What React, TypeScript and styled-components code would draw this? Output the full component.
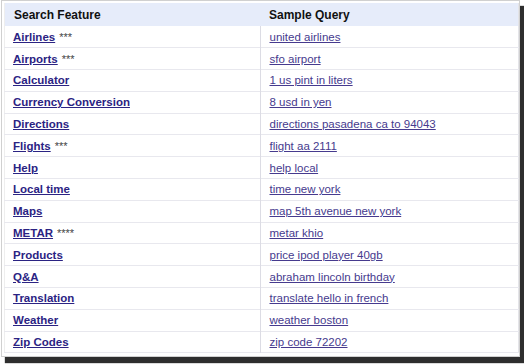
import styled, { createGlobalStyle } from 'styled-components';

const GlobalStyle = createGlobalStyle`
  html, body {
    margin: 0;
    padding: 0;
    background: #ffffff;
    min-height: 364px;
  }
  body {
    font-family: "Liberation Sans", Arial, sans-serif;
  }
`;

const Page = styled.div`
  min-height: 364px;
`;

const Frame = styled.div`
  box-sizing: border-box;
  width: 519px;
  margin: 0 0 0 1px;
  padding: 2px 2px 3px 2px;
  border: 1px solid #d0d0d0;
  background: #ffffff;
  box-shadow: 4px 6px 1px #2e2e2e;
`;

const Table = styled.table`
  width: 513px;
  border-collapse: collapse;
  table-layout: fixed;
  font-size: 11.5px;
  border-right: 1px solid #e4e4e8;
  border-left: 1px solid #eeeeee;
`;

const HeadCell = styled.th<{ $width: number; $pad: number }>`
  width: ${({ $width }) => $width}px;
  height: 23px;
  padding: 0 0 0 ${({ $pad }) => $pad}px;
  text-align: left;
  font-weight: bold;
  font-size: 12px;
  color: #111111;
  background: #e6ecfa;
`;

const Row = styled.tr`
  height: 21.8px;
  border-bottom: 1px solid #e8e8ee;
`;

const Cell = styled.td<{ $divider?: boolean }>`
  padding: 0 0 0 ${({ $divider }) => ($divider ? 9 : 8)}px;
  border-left: ${({ $divider }) => ($divider ? '1px solid #dcdce4' : 'none')};
  white-space: nowrap;
`;

const FeatureLink = styled.a`
  color: #2b2383;
  font-weight: bold;
  text-decoration: underline;
`;

const QueryLink = styled.a`
  color: #463a8e;
  text-decoration: underline;
`;

const Stars = styled.span`
  color: #444444;
  font-size: 11px;
  margin-left: 4px;
`;

type Feature = {
  name: string;
  stars?: string;
  query: string;
};

const features: Feature[] = [
  { name: 'Airlines', stars: '***', query: 'united airlines' },
  { name: 'Airports', stars: '***', query: 'sfo airport' },
  { name: 'Calculator', query: '1 us pint in liters' },
  { name: 'Currency Conversion', query: '8 usd in yen' },
  { name: 'Directions', query: 'directions pasadena ca to 94043' },
  { name: 'Flights', stars: '***', query: 'flight aa 2111' },
  { name: 'Help', query: 'help local' },
  { name: 'Local time', query: 'time new york' },
  { name: 'Maps', query: 'map 5th avenue new york' },
  { name: 'METAR', stars: '****', query: 'metar khio' },
  { name: 'Products', query: 'price ipod player 40gb' },
  { name: 'Q&A', query: 'abraham lincoln birthday' },
  { name: 'Translation', query: 'translate hello in french' },
  { name: 'Weather', query: 'weather boston' },
  { name: 'Zip Codes', query: 'zip code 72202' },
];

const App = () => (
  <Page>
    <GlobalStyle />
    <Frame>
      <Table>
        <thead>
          <tr>
            <HeadCell $width={246} $pad={9}>Search Feature</HeadCell>
            <HeadCell $width={249} $pad={9}>Sample Query</HeadCell>
          </tr>
        </thead>
        <tbody>
          {features.map((f) => (
            <Row key={f.name}>
              <Cell>
                <FeatureLink href="#">{f.name}</FeatureLink>
                {f.stars && <Stars>{f.stars}</Stars>}
              </Cell>
              <Cell $divider>
                <QueryLink href="#">{f.query}</QueryLink>
              </Cell>
            </Row>
          ))}
        </tbody>
      </Table>
    </Frame>
  </Page>
);

export default App;
